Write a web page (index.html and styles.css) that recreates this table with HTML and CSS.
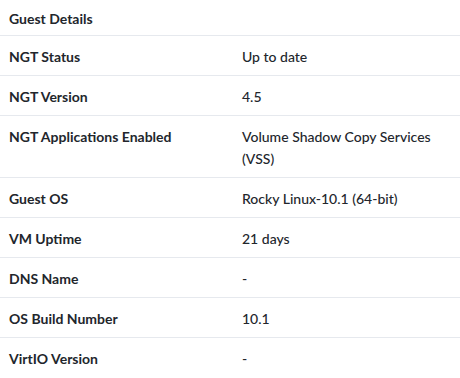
FILE: index.html
```html
<!DOCTYPE html>
<html lang="en">
<head>
    <meta charset="UTF-8">
    <title>Guest Details</title>
    <link rel="stylesheet" href="styles.css">
</head>
<body>
    <div class="panel">
        <!-- header -->
        <div class="panel-header">Guest Details</div>

        <div class="detail-row">
            <div class="detail-label">NGT Status</div>
            <div class="detail-value">Up to date</div>
        </div>
        <div class="detail-row">
            <div class="detail-label">NGT Version</div>
            <div class="detail-value">4.5</div>
        </div>
        <div class="detail-row">
            <div class="detail-label">NGT Applications Enabled</div>
            <div class="detail-value">Volume Shadow Copy Services (VSS)</div>
        </div>
        <div class="detail-row">
            <div class="detail-label">Guest OS</div>
            <div class="detail-value">Rocky Linux-10.1 (64-bit)</div>
        </div>
        <div class="detail-row">
            <div class="detail-label">VM Uptime</div>
            <div class="detail-value">21 days</div>
        </div>
        <div class="detail-row">
            <div class="detail-label">DNS Name</div>
            <div class="detail-value">-</div>
        </div>
        <div class="detail-row">
            <div class="detail-label">OS Build Number</div>
            <div class="detail-value">10.1</div>
        </div>
        <div class="detail-row">
            <div class="detail-label">VirtIO Version</div>
            <div class="detail-value">-</div>
        </div>
    </div>
</body>
</html>
```

FILE: styles.css
```css
* {
    margin: 0;
    padding: 0;
    box-sizing: border-box;
    font-family: Lato, "Open Sans", Arial, sans-serif;
}

body {
    background: white;
    color: #22262c;
    font-size: 14px;
}

.panel {
    width: 460px;
    background: white;
}

.panel-header {
    padding: 8px 9px 5px;
    line-height: 22px;
    font-weight: 700;
    border-bottom: 1px solid #e6e9ee;
}

.detail-row {
    display: grid;
    grid-template-columns: 233px 1fr;
    padding: 10px 0 7px;
    line-height: 22px;
    border-bottom: 1px solid #e6e9ee;
}

.detail-row:last-child {
    border-bottom: none;
}

.detail-label {
    padding-left: 9px;
    font-weight: 700;
}

.detail-value {
    padding-left: 9px;
    padding-right: 10px;
    font-weight: 500;
}
```
